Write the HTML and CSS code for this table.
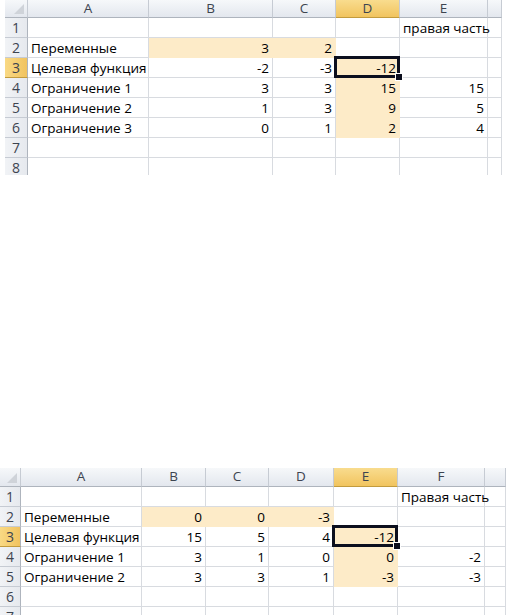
FILE: index.html
```html
<!DOCTYPE html>
<html lang="ru">
<head>
<meta charset="utf-8">
<link rel="stylesheet" href="styles.css">
</head>
<body>
<div class="sheet sheet-top">
  <div class="grid grid-top">
    <div class="hd corner"></div><div class="hd">A</div><div class="hd">B</div><div class="hd">C</div><div class="hd sel">D</div><div class="hd">E</div><div class="hd"></div>

    <div class="rh">1</div><div class="c"></div><div class="c"></div><div class="c"></div><div class="c"></div><div class="c t">правая часть</div><div class="c"></div>

    <div class="rh">2</div><div class="c t">Переменные</div><div class="c n hl">3</div><div class="c n hl">2</div><div class="c"></div><div class="c"></div><div class="c"></div>

    <div class="rh sel">3</div><div class="c t">Целевая функция</div><div class="c n">-2</div><div class="c n">-3</div><div class="c n hl active">-12</div><div class="c"></div><div class="c"></div>

    <div class="rh">4</div><div class="c t">Ограничение 1</div><div class="c n">3</div><div class="c n">3</div><div class="c n hl">15</div><div class="c n">15</div><div class="c"></div>

    <div class="rh">5</div><div class="c t">Ограничение 2</div><div class="c n">1</div><div class="c n">3</div><div class="c n hl">9</div><div class="c n">5</div><div class="c"></div>

    <div class="rh">6</div><div class="c t">Ограничение 3</div><div class="c n">0</div><div class="c n">1</div><div class="c n hl">2</div><div class="c n">4</div><div class="c"></div>

    <div class="rh">7</div><div class="c"></div><div class="c"></div><div class="c"></div><div class="c"></div><div class="c"></div><div class="c"></div>

    <div class="rh">8</div><div class="c"></div><div class="c"></div><div class="c"></div><div class="c"></div><div class="c"></div><div class="c"></div>
  </div>
</div>

<div class="sheet sheet-bottom">
  <div class="grid grid-bottom">
    <div class="hd corner"></div><div class="hd">A</div><div class="hd">B</div><div class="hd">C</div><div class="hd">D</div><div class="hd sel">E</div><div class="hd">F</div><div class="hd"></div>

    <div class="rh">1</div><div class="c"></div><div class="c"></div><div class="c"></div><div class="c"></div><div class="c"></div><div class="c t">Правая часть</div><div class="c"></div>

    <div class="rh">2</div><div class="c t">Переменные</div><div class="c n hl">0</div><div class="c n hl">0</div><div class="c n hl">-3</div><div class="c"></div><div class="c"></div><div class="c"></div>

    <div class="rh sel">3</div><div class="c t">Целевая функция</div><div class="c n">15</div><div class="c n">5</div><div class="c n">4</div><div class="c n hl active">-12</div><div class="c"></div><div class="c"></div>

    <div class="rh">4</div><div class="c t">Ограничение 1</div><div class="c n">3</div><div class="c n">1</div><div class="c n">0</div><div class="c n hl">0</div><div class="c n">-2</div><div class="c"></div>

    <div class="rh">5</div><div class="c t">Ограничение 2</div><div class="c n">3</div><div class="c n">3</div><div class="c n">1</div><div class="c n hl">-3</div><div class="c n">-3</div><div class="c"></div>

    <div class="rh">6</div><div class="c"></div><div class="c"></div><div class="c"></div><div class="c"></div><div class="c"></div><div class="c"></div><div class="c"></div>

    <div class="rh">7</div><div class="c"></div><div class="c"></div><div class="c"></div><div class="c"></div><div class="c"></div><div class="c"></div><div class="c"></div>
  </div>
</div>
</body>
</html>
```

FILE: styles.css
```css
html, body {
  margin: 0;
  padding: 0;
  background: #fff;
}

body {
  width: 506px;
  height: 615px;
  overflow: hidden;
  font-family: "Open Sans", "Noto Sans", sans-serif;
  font-size: 13.5px;
  color: #000;
}

.sheet {
  overflow: hidden;
}

.sheet-top {
  height: 175px;
  padding-left: 5px;
}

.sheet-bottom {
  margin-top: 293px;
  height: 147px;
}

.grid {
  display: grid;
  grid-auto-rows: 20px;
}

.grid-top {
  grid-template-columns: 23px 121px 124px 63px 64px 88px 14px;
  grid-template-rows: 18px;
}

.grid-bottom {
  grid-template-columns: 21px 121px 64px 63px 65px 64px 87px 21px;
  grid-template-rows: 19px;
}

.hd {
  background: linear-gradient(#f6f8fa, #e3e7ee);
  border-right: 1px solid #c6cbd3;
  border-bottom: 1px solid #aeb4bd;
  color: #3d4450;
  font-size: 13.5px;
  display: flex;
  align-items: center;
  justify-content: center;
  line-height: 1;
}

.hd.sel {
  background: linear-gradient(#f9dc8e, #f1c45f);
  border-bottom-color: #c29b3e;
}

.corner {
  position: relative;
}

.corner::after {
  content: "";
  position: absolute;
  right: 3px;
  bottom: 3px;
  width: 0;
  height: 0;
  border-left: 10px solid transparent;
  border-bottom: 10px solid #cfd3d9;
}

.rh {
  background: linear-gradient(90deg, #f1f3f6, #e6e9ee);
  border-right: 1px solid #aeb4bd;
  border-bottom: 1px solid #c6cbd3;
  color: #3d4450;
  font-size: 14px;
  display: flex;
  align-items: flex-end;
  justify-content: center;
  padding-bottom: 2px;
  box-sizing: border-box;
  line-height: 1;
}

.rh.sel {
  background: linear-gradient(90deg, #f9d984, #f1c35f);
  border-bottom-color: #c29b3e;
}

.c {
  border-right: 1px solid #d8dbe0;
  border-bottom: 1px solid #d8dbe0;
  display: flex;
  align-items: flex-end;
  padding: 0 3px 2px;
  box-sizing: border-box;
  white-space: nowrap;
  overflow: visible;
  line-height: 1;
}

.c.n {
  justify-content: flex-end;
}

.c.hl {
  background: #fdebc8;
  border-right-color: #fdebc8;
  border-bottom-color: #fdebc8;
}

.c.active {
  position: relative;
}

.c.active::before {
  content: "";
  position: absolute;
  left: -2px;
  top: -2px;
  right: -1px;
  bottom: -1px;
  border: 3px solid #0c0f1e;
  pointer-events: none;
}

.c.active::after {
  content: "";
  position: absolute;
  right: -4px;
  bottom: -4px;
  width: 6px;
  height: 6px;
  background: #0c0f1e;
  border: 1px solid #fff;
}
```
